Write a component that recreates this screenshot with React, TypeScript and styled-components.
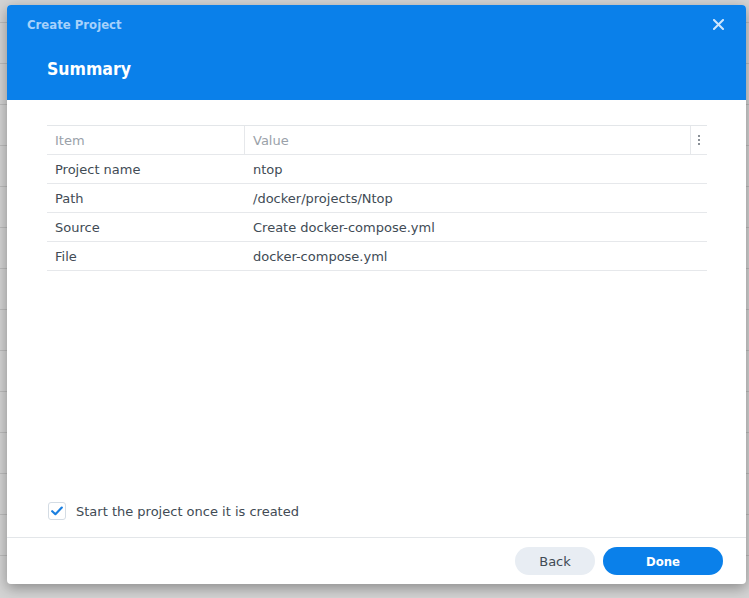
import React from "react";
import styled, { createGlobalStyle } from "styled-components";

const Global = createGlobalStyle`
  html, body { margin: 0; padding: 0; }
  body {
    width: 749px;
    height: 598px;
    overflow: hidden;
    background-color: #d4d4d4;
    background-image: repeating-linear-gradient(
      to bottom,
      transparent 0px,
      transparent 40px,
      #bdbdbd 40px,
      #bdbdbd 41px
    );
    background-position: 0 -18px;
    font-family: "DejaVu Sans", Verdana, sans-serif;
  }
`;

const Stage = styled.div`
  position: relative;
  width: 749px;
  height: 598px;
`;

const Dialog = styled.div`
  position: absolute;
  left: 7px;
  top: 5px;
  width: 739px;
  height: 579px;
  background: #fff;
  border-radius: 4px;
  box-shadow: 0 4px 14px rgba(0, 0, 0, 0.35);
  display: flex;
  flex-direction: column;
  overflow: hidden;
`;

const Header = styled.div`
  background: #0a80ea;
  height: 95px;
  padding: 0 0 0 20px;
  display: flex;
  flex-direction: column;
  box-sizing: border-box;
`;

const TitleBar = styled.div`
  height: 38px;
  display: flex;
  align-items: center;
  justify-content: space-between;
`;

const Title = styled.div`
  color: #a6d1fb;
  font-family: "DejaVu Sans Condensed", "DejaVu Sans", sans-serif;
  font-weight: bold;
  font-size: 13px;
`;

const Close = styled.button`
  width: 24px;
  height: 24px;
  margin-right: 16px;
  border: none;
  background: transparent;
  padding: 0;
  display: flex;
  align-items: center;
  justify-content: center;
  cursor: pointer;
`;

const Heading = styled.h1`
  margin: 16px 0 0 20px;
  color: #fff;
  font-size: 17.5px;
  font-weight: bold;
  font-family: "DejaVu Sans Condensed", "DejaVu Sans", sans-serif;
`;

const Body = styled.div`
  flex: 1;
  padding: 25px 39px 0 40px;
  display: flex;
  flex-direction: column;
`;

const Table = styled.div`
  border-top: 1px solid #e3e6e9;
`;

const Row = styled.div<{ $head?: boolean }>`
  display: grid;
  grid-template-columns: 198px 1fr 16px;
  height: 29px;
  border-bottom: 1px solid #e6e8eb;
  box-sizing: border-box;
  color: ${(p) => (p.$head ? "#9aa1a9" : "#414b55")};
  font-size: 13px;
`;

const Cell = styled.div<{ $divider?: boolean }>`
  display: flex;
  align-items: center;
  padding-left: 8px;
  border-right: ${(p) => (p.$divider ? "1px solid #e6e8eb" : "none")};
  white-space: nowrap;
`;

const MenuCell = styled.div`
  display: flex;
  align-items: center;
  justify-content: center;
  flex-direction: column;
  gap: 2px;
`;

const Dot = styled.span`
  width: 2px;
  height: 2px;
  background: #8a9097;
`;

const Spacer = styled.div`
  flex: 1;
`;

const CheckRow = styled.label`
  display: flex;
  align-items: center;
  gap: 10px;
  margin: 0 0 17px 1px;
  color: #414b55;
  font-size: 13px;
`;

const Box = styled.span`
  width: 16px;
  height: 16px;
  border: 1px solid #d4dce4;
  border-radius: 3px;
  background: #fff;
  display: flex;
  align-items: center;
  justify-content: center;
`;

const Footer = styled.div`
  height: 46px;
  border-top: 1px solid #e3e6e9;
  display: flex;
  align-items: center;
  justify-content: flex-end;
  gap: 8px;
  padding-right: 23px;
`;

const Button = styled.button<{ $primary?: boolean }>`
  height: 28px;
  width: ${(p) => (p.$primary ? "120px" : "80px")};
  border: none;
  border-radius: 14px;
  font-family: ${(p) =>
    p.$primary ? `"DejaVu Sans Condensed", "DejaVu Sans", sans-serif` : `"DejaVu Sans", sans-serif`};
  font-size: 13px;
  font-weight: ${(p) => (p.$primary ? "bold" : "normal")};
  color: ${(p) => (p.$primary ? "#fff" : "#414b55")};
  background: ${(p) => (p.$primary ? "#0a80ea" : "#e8edf3")};
  cursor: pointer;
`;

const rows = [
  ["Project name", "ntop"],
  ["Path", "/docker/projects/Ntop"],
  ["Source", "Create docker-compose.yml"],
  ["File", "docker-compose.yml"],
];

export default function App() {
  return (
    <>
      <Global />
      <Stage>
        <Dialog>
          <Header>
            <TitleBar>
              <Title>Create Project</Title>
              <Close aria-label="Close">
                <svg width="11" height="11" viewBox="0 0 11 11">
                  <path d="M1 1L10 10M10 1L1 10" stroke="#cfe6fd" strokeWidth="2" strokeLinecap="square" />
                </svg>
              </Close>
            </TitleBar>
            <Heading>Summary</Heading>
          </Header>
          <Body>
            <Table>
              <Row $head>
                <Cell $divider>Item</Cell>
                <Cell $divider>Value</Cell>
                <MenuCell>
                  <Dot />
                  <Dot />
                  <Dot />
                </MenuCell>
              </Row>
              {rows.map(([k, v]) => (
                <Row key={k}>
                  <Cell>{k}</Cell>
                  <Cell>{v}</Cell>
                  <span />
                </Row>
              ))}
            </Table>
            <Spacer />
            <CheckRow>
              <Box>
                <svg width="12" height="10" viewBox="0 0 12 10">
                  <path d="M1.2 5.2L4.4 8.2L10.8 1.6" fill="none" stroke="#1a7fe0" strokeWidth="2.2" strokeLinecap="round" strokeLinejoin="round" />
                </svg>
              </Box>
              Start the project once it is created
            </CheckRow>
          </Body>
          <Footer>
            <Button>Back</Button>
            <Button $primary>Done</Button>
          </Footer>
        </Dialog>
      </Stage>
    </>
  );
}
